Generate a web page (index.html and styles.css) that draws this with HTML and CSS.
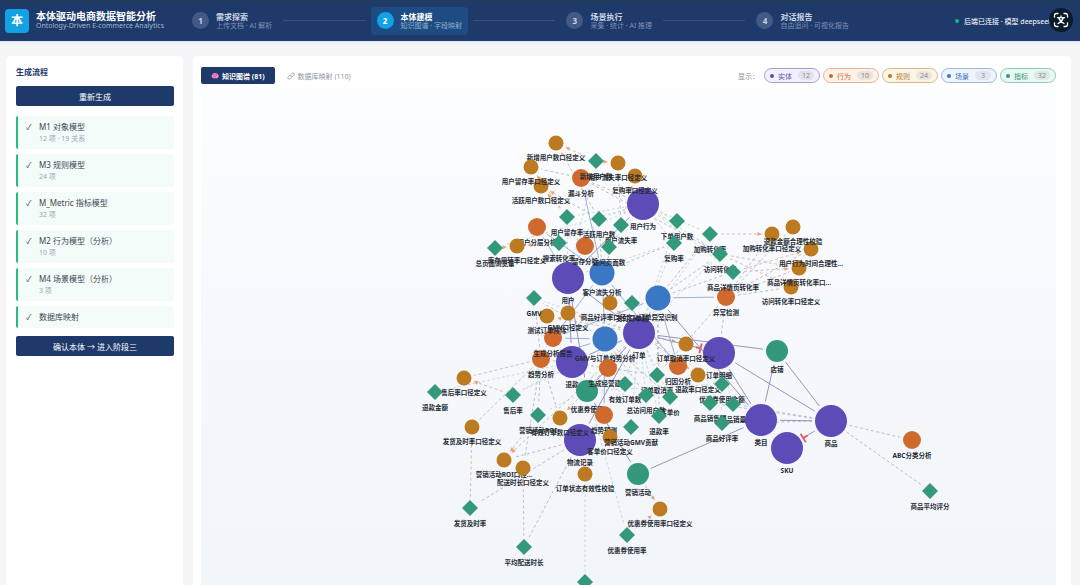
FILE: index.html
```html
<!DOCTYPE html>
<html lang="zh-CN">
<head>
  <meta charset="UTF-8" />
  <meta name="viewport" content="width=device-width, initial-scale=1.0"/>
  <title>本体驱动电商数据智能分析</title>
  <link rel="stylesheet" href="styles.css">
</head>
<body>

  <header class="topbar">
    <div class="logo">本</div>
    <div class="brand">
      <h1>本体驱动电商数据智能分析</h1>
      <p>Ontology-Driven E-commerce Analytics</p>
    </div>
    <nav class="phases">
      <a class="phase" href="#explore"><span class="num">1</span><span class="phase-text"><b>需求探索</b><small>上传文档 · AI 解析</small></span></a>
      <span class="line"></span>
      <a class="phase active" href="#model"><span class="num">2</span><span class="phase-text"><b>本体建模</b><small>知识图谱 · 字段映射</small></span></a>
      <span class="line"></span>
      <a class="phase" href="#run"><span class="num">3</span><span class="phase-text"><b>场景执行</b><small>采集 · 统计 · AI 推理</small></span></a>
      <span class="line"></span>
      <a class="phase" href="#report"><span class="num">4</span><span class="phase-text"><b>对话报告</b><small>自由追问 · 可视化报告</small></span></a>
    </nav>
    <div class="status"><i></i>后端已连接 · 模型 deepseek</div>
    <button class="translate" aria-label="翻译">
      <svg viewBox="0 0 24 24" fill="none" stroke="#fff" stroke-width="1.3" stroke-linecap="round" stroke-linejoin="round">
        <path d="M5.500 9V7.500Q5.500 5.500 7.500 5.500H9M15 5.500h1.500Q18.500 5.500 18.500 7.500V9M18.500 15v1.500Q18.500 18.500 16.500 18.500H15M9 18.500H7.500Q5.500 18.500 5.500 16.500V15"/>
        <path d="M12 8v1.500M8.500 9.700h7M14.300 9.700Q13 13.500 9 15.500M9.700 9.700Q11 13.500 15 15.500"/>
      </svg>
    </button>
  </header>

  <main class="layout">
    <aside class="sidebar">
      <h2>生成流程</h2>
      <button class="primary">重新生成</button>
      <ul class="flow">
        <li><span class="tick">✓</span><div>M1 对象模型<small>12 项 · 19 关系</small></div></li>
        <li><span class="tick">✓</span><div>M3 规则模型<small>24 项</small></div></li>
        <li><span class="tick">✓</span><div>M_Metric 指标模型<small>32 项</small></div></li>
        <li><span class="tick">✓</span><div>M2 行为模型（分析）<small>10 项</small></div></li>
        <li><span class="tick">✓</span><div>M4 场景模型（分析）<small>3 项</small></div></li>
        <li><span class="tick">✓</span><div>数据库映射</div></li>
      </ul>
      <button class="primary">确认本体 → 进入阶段三</button>
    </aside>

    <section class="panel">
      <div class="toolbar">
        <button class="tab active">
          <svg viewBox="0 0 16 16"><path d="M2 10Q0 7 3 5Q4 1 8 2Q13 1 14 5Q17 8 14 11Q12 14 9 12Q7 15 5 12Q3 13 2 10Z" fill="#f58ac4"/><path d="M4 6q3-2 4 1M8 4q4 0 3 4M5 10q3 1 5-1" fill="none" stroke="#c2418c" stroke-width="1.2"/></svg>
          知识图谱 (81)
        </button>
        <button class="tab">
          <svg viewBox="0 0 16 16" fill="none" stroke="#8d97a3" stroke-width="1.600" stroke-linecap="round"><path d="M7.500 5L9.500 3Q11.500 1 13.500 2.500T13.500 6.500L11.500 8.500Q9.500 10 7.800 8.500M8.500 11L6.500 13Q4.500 15 2.500 13.500T2.500 9.500L4.500 7.500Q6.500 6 8.200 7.500"/></svg>
          数据库映射 (110)
        </button>
        <div class="filters">
          <span>显示：</span>
          <button class="chip entity"><i></i>实体<em>12</em></button>
          <button class="chip action"><i></i>行为<em>10</em></button>
          <button class="chip rule"><i></i>规则<em>24</em></button>
          <button class="chip scene"><i></i>场景<em>3</em></button>
          <button class="chip metric"><i></i>指标<em>32</em></button>
        </div>
      </div>
      <div class="canvas">
        <svg id="graph" class="graph" viewBox="400 176 1710 1040" role="img" aria-label="知识图谱"></svg>
      </div>
    </section>
  </main>

  <script src="graph.js"></script>
</body>
</html>
```
FILE: styles.css
```css
* {
  box-sizing: border-box;
}
body {
  margin: 0;
  height: 100vh;
  display: flex;
  flex-direction: column;
  overflow: hidden;
  background: #f3f5f7;
  color: #3c4653;
  font-family: "Noto Sans", "Noto Sans CJK SC", sans-serif;
  font-size: 8px;
}
h1, h2, p, ul {
  margin: 0;
  padding: 0;
}
button {
  font-family: inherit;
  font-size: 8px;
  border: none;
  padding: 0;
  cursor: pointer;
}
.topbar {
  height: 41px;
  flex: none;
  display: flex;
  align-items: center;
  padding: 0 10px 0 5px;
  background: linear-gradient(#203d5f, #1e3a6b 5px);
  color: white;
  box-shadow: 0 1px 3px #d5def3;
}
.logo {
  width: 24px;
  height: 24px;
  flex: none;
  border-radius: 4px;
  background: #12a2e3;
  font-size: 12px;
  font-weight: bold;
  line-height: 24px;
  text-align: center;
}
.brand {
  width: 150px;
  flex: none;
  margin-left: 7px;
  white-space: nowrap;
}
.brand h1 {
  font-size: 10px;
  line-height: 11px;
}
.brand p {
  font-size: 7px;
  line-height: 8px;
  color: #a4b3cd;
}
.phases {
  flex: 1;
  display: flex;
  align-items: center;
  gap: 5px;
}
.phase {
  height: 28px;
  display: flex;
  align-items: center;
  gap: 7px;
  padding: 0 6px;
  border-radius: 4px;
  color: #c9d3e4;
  text-decoration: none;
  white-space: nowrap;
}
.phase.active {
  background: #1d4c82;
  color: white;
}
.num {
  width: 17px;
  height: 17px;
  border-radius: 50%;
  background: #435a86;
  font-weight: bold;
  line-height: 17px;
  text-align: center;
}
.active .num {
  background: #12a2e3;
}
.phase b, .phase small {
  display: block;
  line-height: 9px;
}
.phase small {
  font-size: 7px;
  color: #7d90b4;
}
.phase.active small {
  color: #91aed0;
}
.line {
  flex: 1;
  height: 1px;
  background: #34507e;
}
.status {
  width: 115px;
  flex: none;
  margin-left: 100px;
  display: flex;
  align-items: center;
  gap: 5px;
  font-size: 7px;
  white-space: nowrap;
}
.status i {
  width: 4px;
  height: 4px;
  border-radius: 50%;
  background: #14b87b;
}
.translate {
  position: absolute;
  top: 8px;
  right: 7px;
  width: 24px;
  height: 24px;
  border-radius: 50%;
  background: #091a2b;
}
.translate svg {
  display: block;
}
.layout {
  flex: 1;
  min-height: 0;
  display: flex;
  gap: 10px;
  padding: 15px 9px 0 6px;
}
.sidebar, .panel {
  background: white;
  border-radius: 5px 5px 0 0;
}
.sidebar {
  width: 177px;
  flex: none;
  padding: 10px 9px 10px 10px;
}
.sidebar h2 {
  margin-bottom: 8px;
  font-size: 8px;
  line-height: 12px;
  color: #1e3a6b;
}
.primary {
  display: block;
  width: 100%;
  height: 20px;
  border-radius: 2px;
  background: #1e3a6b;
  color: white;
}
.flow {
  list-style: none;
  display: grid;
  gap: 5px;
  margin: 10px 0 8px;
}
.flow li {
  display: flex;
  gap: 6px;
  padding: 5px 8px;
  border-left: 2px solid #25be80;
  border-radius: 2px;
  background: #f4fcfa;
  line-height: 12px;
}
.tick {
  width: 7px;
}
.flow small {
  display: block;
  font-size: 7px;
  line-height: 11px;
  color: #9ba5ae;
}
.panel {
  flex: 1;
  min-width: 0;
  padding: 11px 15px 0 8px;
  display: flex;
  flex-direction: column;
}
.toolbar {
  display: flex;
  align-items: center;
  height: 17px;
  flex: none;
  margin-bottom: 4px;
}
.tab {
  display: flex;
  align-items: center;
  justify-content: center;
  gap: 3px;
  height: 17px;
  padding: 0 8px;
  margin-right: 4px;
  border-radius: 2px;
  background: none;
  color: #8d97a3;
  font-size: 7px;
}
.tab svg {
  width: 8px;
  height: 8px;
}
.tab.active {
  padding: 0 10px;
  background: #1e3a6b;
  color: white;
  font-weight: bold;
}
.filters {
  display: flex;
  align-items: center;
  gap: 3px;
  margin-left: auto;
  font-size: 7px;
  color: #919aa4;
}
.filters span {
  margin-right: 2px;
}
.chip {
  display: flex;
  align-items: center;
  gap: 4px;
  height: 15px;
  padding: 0 5px;
  border: 1px solid;
  border-radius: 8px;
  font-size: 7px;
}
.chip i {
  width: 4px;
  height: 4px;
  border-radius: 50%;
  background: currentColor;
}
.chip em {
  min-width: 16px;
  margin-left: 2px;
  border-radius: 5px;
  background: #00000010;
  color: #848b9b;
  font-style: normal;
  line-height: 9px;
  text-align: center;
}
.chip.entity { color: #5b4db8; background: #f2f1fb; border-color: #a49ed6; }
.chip.action { color: #cf682d; background: #fdf1ea; border-color: #e5b598; }
.chip.rule { color: #b9791d; background: #fbf5e9; border-color: #d9ba86; }
.chip.scene { color: #3b76c3; background: #eff4fc; border-color: #9cb8df; }
.chip.metric { color: #33997a; background: #eaf8f3; border-color: #92cbb8; }
.canvas {
  flex: 1;
  min-height: 0;
  overflow: hidden;
  background: linear-gradient(#fcfdfe, #f7f9fc 40%, #f2f5f9);
}
.graph {
  display: block;
  width: 100%;
}

/* graph */
.graph text {
  font-size: 13px;
  font-weight: bold;
  fill: #252b35;
  text-anchor: middle;
}
.graph .entity { fill: #5d4cb8; }
.graph .entity2 { fill: #34997a; }
.graph .scene { fill: #3a77c4; }
.graph .action { fill: #d0692d; }
.graph .rule { fill: #bd7a20; }
.graph .metric { fill: #34997a; }
.graph line {
  stroke-width: 2;
}
.graph .relation { stroke: #9496c2; }
.graph .covers { stroke: #9db2dc; }
.graph .computes { stroke: #bcc2c3; stroke-dasharray: 6 5; }
.graph .measures { stroke: #c6dad5; stroke-dasharray: 5 5; }
.graph .constrains { stroke: #cfbfb9; stroke-dasharray: 6 5; }
.graph .arrow { fill: #e9a177; }
.graph .bar { stroke: #e1636b; stroke-width: 4; }
```
FILE: graph.js
```js
// canvas units per layout unit
const ZOOM = 2;

// radius and label distance for each node type
const TYPES = {
  entity: { r: 32, label: 50 },
  entity2: { r: 22, label: 41 },
  scene: { r: 25, label: 43 },
  action: { r: 18, label: 36 },
  rule: { r: 15, label: 34 },
  metric: { r: 16, label: 35 }
};

// later nodes are drawn over earlier ones
const NODES = {
  entity: [
    ["用户行为", 642, 204], ["用户", 567, 278], ["订单", 638, 333], ["退款", 571, 362],
    ["订单明细", 718, 353], ["类目", 760, 420], ["SKU", 786, 448], ["商品", 830, 421], ["物流记录", 579, 440]
  ],
  entity2: [["店铺", 776, 351], ["优惠券使用", 586, 391], ["营销活动", 637, 474]],
  scene: [["客户流失分析", 601, 273], ["订单异常识别", 657, 298], ["GMV与订单趋势分析", 604, 339]],
  action: [
    ["漏斗分析", 580, 178], ["用户分层分析", 536, 227], ["留存分析", 584, 246], ["异常检测", 725, 297],
    ["趋势分析", 540, 359], ["生成分析报告", 552, 338], ["生成经营建议", 607, 368], ["归因分析", 677, 366],
    ["趋势预测", 603, 415], ["ABC分类分析", 911, 440]
  ],
  rule: [
    ["活跃用户数口径定义", 540, 186], ["新增用户数口径定义", 555, 143], ["用户留存率口径定义", 530, 167],
    ["复购率口径定义", 634, 176], ["用户流失率口径定义", 617, 163], ["库存周转率口径定义", 516, 246],
    ["访问转化率口径定义", 790, 287], ["商品详情页转化率口...", 798, 268], ["用户行为时间合理性...", 810, 249],
    ["加购转化率口径定义", 771, 234], ["退款金额合理性校验", 792, 227], ["商品好评率口径定义", 609, 303],
    ["测试订单排除", 546, 316], ["GMV口径定义", 567, 313], ["订单取消率口径定义", 685, 344],
    ["退款率口径定义", 697, 375], ["售后率口径定义", 463, 378], ["发货及时率口径定义", 471, 427],
    ["营销活动ROI口径...", 503, 460], ["配送时长口径定义", 522, 468], ["有效订单数口径定义", 559, 418],
    ["客单价口径定义", 609, 437], ["订单状态有效性校验", 584, 474], ["优惠券使用率口径定义", 659, 509]
  ],
  metric: [
    ["新增用户数", 595, 161], ["用户留存率", 566, 217], ["活跃用户数", 598, 219], ["用户流失率", 620, 225],
    ["下单用户数", 676, 221], ["加购转化率", 709, 234], ["复购率", 673, 243], ["访问转化率", 719, 254],
    ["商品详情页转化率", 732, 272], ["搜索转化率", 558, 243], ["访问页面数", 608, 247], ["总页面浏览量", 494, 248],
    ["GMV", 533, 298], ["支付订单数", 631, 303], ["退款金额", 434, 392], ["售后率", 512, 395],
    ["营销活动ROI", 537, 415], ["有效订单数", 624, 384], ["订单取消率", 656, 375], ["总访问用户数", 645, 395],
    ["客单价", 669, 397], ["退款率", 658, 416], ["营销活动GMV贡献", 630, 427], ["优惠券使用金额", 721, 384],
    ["商品销售额", 709, 403], ["商品销量", 732, 404], ["商品好评率", 721, 423], ["优惠券使用率", 626, 535],
    ["发货及时率", 469, 508], ["平均配送时长", 523, 547], ["商品平均评分", 929, 491], ["状态", 584, 582, "unlabelled"]
  ]
};

const EDGES = {
  relation: [
    ["用户", "订单 用户行为 退款 优惠券使用"],
    ["订单", "订单明细 店铺 退款 物流记录 优惠券使用"],
    ["订单明细", "类目 商品"],
    ["商品", "类目 店铺 SKU"],
    ["类目", "店铺 SKU 营销活动 订单异常识别"],
    ["优惠券使用", "营销活动"]
  ],
  covers: [
    ["客户流失分析", "用户 漏斗分析 用户分层分析 留存分析 归因分析 生成分析报告"],
    ["订单异常识别", "异常检测 归因分析 订单 生成分析报告"],
    ["GMV与订单趋势分析", "趋势分析 生成经营建议 生成分析报告 订单 趋势预测 客户流失分析"],
    ["用户", "用户分层分析 留存分析"]
  ],
  computes: [
    ["异常检测", "订单取消率 订单明细 加购转化率口径定义 退款金额合理性校验 用户行为时间合理性... 商品详情页转化率口... 访问转化率口径定义"],
    ["趋势分析", "GMV 售后率口径定义 发货及时率口径定义 营销活动ROI 有效订单数口径定义 配送时长口径定义 订单取消率"],
    ["漏斗分析", "用户行为 新增用户数 用户留存率口径定义 访问转化率"],
    ["商品", "ABC分类分析 商品平均评分 商品好评率 商品销量 商品销售额"],
    ["物流记录", "发货及时率 平均配送时长 营销活动ROI口径..."],
    ["客户流失分析", "用户流失率 复购率 活跃用户数"],
    ["订单异常识别", "退款率 订单取消率 加购转化率 访问转化率 商品详情页转化率"],
    ["GMV与订单趋势分析", "GMV 有效订单数 总访问用户数 客单价"]
  ],
  measures: [
    ["用户行为", "用户留存率 活跃用户数 用户流失率 下单用户数 加购转化率 复购率 访问转化率 商品详情页转化率 搜索转化率 访问页面数 总页面浏览量"],
    ["用户", "新增用户数 用户留存率 活跃用户数 用户流失率 复购率"],
    ["订单", "GMV 支付订单数 售后率 有效订单数 订单取消率 总访问用户数 客单价 退款率 营销活动GMV贡献 优惠券使用金额 下单用户数 复购率 加购转化率 访问转化率"],
    ["退款", "退款金额 退款率 售后率"],
    ["优惠券使用", "优惠券使用率 优惠券使用金额 营销活动ROI"],
    ["订单明细", "商品销售额 商品销量 商品好评率"],
    ["订单状态有效性校验", "状态"]
  ],
  constrains: [
    ["新增用户数", "新增用户数口径定义 用户流失率口径定义"],
    ["用户留存率", "用户留存率口径定义 活跃用户数口径定义"],
    ["活跃用户数", "活跃用户数口径定义 新增用户数口径定义"],
    ["用户流失率", "用户流失率口径定义 复购率口径定义"],
    ["加购转化率", "加购转化率口径定义"],
    ["访问转化率", "访问转化率口径定义 商品详情页转化率口..."],
    ["商品详情页转化率", "商品详情页转化率口... 用户行为时间合理性..."],
    ["搜索转化率", "库存周转率口径定义"],
    ["总页面浏览量", "库存周转率口径定义"],
    ["订单", "订单取消率口径定义 退款率口径定义 测试订单排除 GMV口径定义 商品好评率口径定义 营销活动ROI口径... 有效订单数口径定义"],
    ["售后率", "售后率口径定义"],
    ["发货及时率", "发货及时率口径定义"],
    ["平均配送时长", "配送时长口径定义"],
    ["营销活动ROI", "营销活动ROI口径..."],
    ["物流记录", "订单状态有效性校验"],
    ["优惠券使用率", "优惠券使用率口径定义"],
    ["营销活动", "优惠券使用率口径定义"]
  ]
};

const svg = document.getElementById("graph");
const byName = {};

function add(tag, attrs, text) {
  const el = document.createElementNS("http://www.w3.org/2000/svg", tag);
  for (const key in attrs) el.setAttribute(key, attrs[key]);
  if (text) el.textContent = text;
  svg.appendChild(el);
}

for (const type in NODES) {
  for (const [name, x, y, flag] of NODES[type]) {
    byName[name] = { name, type, flag, x: x * ZOOM, y: y * ZOOM };
  }
}

function drawEdge(kind, a, b) {
  const len = Math.hypot(b.x - a.x, b.y - a.y);
  const ux = (b.x - a.x) / len;
  const uy = (b.y - a.y) / len;
  const start = TYPES[a.type].r + 6;
  const end = TYPES[b.type].r + 6;
  const ex = b.x - ux * end;
  const ey = b.y - uy * end;
  add("line", { class: kind, x1: a.x + ux * start, y1: a.y + uy * start, x2: ex, y2: ey });
  if (kind === "constrains") {
    const bx = ex - ux * 8;
    const by = ey - uy * 8;
    add("polygon", { class: "arrow", points: `${ex},${ey} ${bx - uy * 4},${by + ux * 4} ${bx + uy * 4},${by - ux * 4}` });
  }
  // composition edges end in a short bar
  if ((a.name === "订单" && b.name === "订单明细") || (a.name === "商品" && b.name === "SKU")) {
    add("line", { class: "bar", x1: ex - uy * 10, y1: ey + ux * 10, x2: ex + uy * 10, y2: ey - ux * 10 });
    add("line", { class: "bar", x1: ex - ux * 10, y1: ey - uy * 10, x2: ex, y2: ey });
  }
}

for (const kind of ["measures", "computes", "constrains", "covers", "relation"]) {
  for (const [from, targets] of EDGES[kind]) {
    for (const to of targets.split(" ")) drawEdge(kind, byName[from], byName[to]);
  }
}

for (const node of Object.values(byName)) {
  const { r, label } = TYPES[node.type];
  if (node.type === "metric") {
    add("polygon", { class: "metric", points: `${node.x},${node.y - r} ${node.x + r},${node.y} ${node.x},${node.y + r} ${node.x - r},${node.y}` });
  } else {
    add("circle", { class: node.type, cx: node.x, cy: node.y, r });
  }
  if (node.flag !== "unlabelled") add("text", { x: node.x, y: node.y + label }, node.name);
}
```
